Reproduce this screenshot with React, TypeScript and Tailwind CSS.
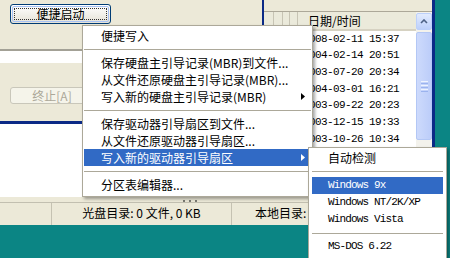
import React from 'react';

const dates = [
  '2008-02-11 15:37',
  '2004-02-14 20:51',
  '2003-07-20 20:34',
  '2004-03-01 16:21',
  '2003-09-22 20:23',
  '2003-12-15 19:33',
  '2003-10-26 10:34',
];

type Entry = { label: string; sub?: boolean; active?: boolean } | 'sep';

const mainMenu: Entry[] = [
  { label: '便捷写入' },
  'sep',
  { label: '保存硬盘主引导记录(MBR)到文件...' },
  { label: '从文件还原硬盘主引导记录(MBR)...' },
  { label: '写入新的硬盘主引导记录(MBR)', sub: true },
  'sep',
  { label: '保存驱动器引导扇区到文件...' },
  { label: '从文件还原驱动器引导扇区...' },
  { label: '写入新的驱动器引导扇区', sub: true, active: true },
  'sep',
  { label: '分区表编辑器...' },
];

const Arrow = () => (
  <svg width="4" height="7" viewBox="0 0 4 7">
    <path d="M0 0L4 3.5L0 7Z" fill="currentColor" />
  </svg>
);

const Sep = ({ h = 'h-[10px]' }: { h?: string }) => (
  <div className={`${h} flex items-center`}>
    <div className="h-px w-full bg-[#aca899]" />
  </div>
);

const ContextMenu = () => (
  <div className="absolute left-[82px] top-[25px] w-[231px] bg-white border border-[#aca899] p-[1px] pb-[3px] shadow-[2px_2px_3px_rgba(0,0,0,0.35)]">
    {mainMenu.map((e, i) =>
      e === 'sep' ? (
        <Sep key={i} />
      ) : (
        <div
          key={i}
          className={`h-[17px] flex items-center justify-between pl-[17px] pr-[6px] whitespace-nowrap ${
            e.active ? 'bg-[#316ac5] text-white' : 'text-black'
          }`}
        >
          <span>{e.label}</span>
          {e.sub && <Arrow />}
        </div>
      )
    )}
  </div>
);

const SubMenu = () => (
  <div className="absolute left-[308px] top-[147px] w-[139px] bg-white border border-[#aca899] px-[3px] pt-[1px] pb-[6px] shadow-[2px_2px_3px_rgba(0,0,0,0.35)]">
    <div className="h-[17px] flex items-center pl-[16px]">自动检测</div>
    <Sep h="h-[11px]" />
    <div className="font-['Liberation_Mono',monospace] text-[11px] leading-[13px] tracking-[-0.85px]">
      <div className="h-[17px] flex items-center pl-[16px] bg-[#316ac5] text-white">Windows 9x</div>
      <div className="h-[17px] flex items-center pl-[16px]">Windows NT/2K/XP</div>
      <div className="h-[17px] flex items-center pl-[16px]">Windows Vista</div>
    </div>
    <Sep />
    <div className="font-['Liberation_Mono',monospace] text-[11px] leading-[13px] tracking-[-0.85px]">
      <div className="h-[17px] flex items-center pl-[16px]">MS-DOS 6.22</div>
    </div>
  </div>
);

const ScrollBar = () => (
  <div className="w-[16px] flex flex-col bg-[#f3f2ec] pt-[1px]">
    <div className="h-[17px] rounded-[2px] border border-[#bcd0fa] bg-gradient-to-b from-[#e2ebfe] to-[#bdd0fb] flex items-center justify-center">
      <svg width="8" height="5" viewBox="0 0 8 5">
        <path d="M1 4L4 1L7 4" stroke="#4d6185" strokeWidth="1.6" fill="none" />
      </svg>
    </div>
    <div className="mt-[2px] h-[108px] rounded-[2px] border border-[#b3c7f5] bg-gradient-to-r from-[#cddafc] to-[#bccdf9] flex flex-col items-center justify-center gap-[1px]">
      <div className="h-px w-[7px] bg-[#eef3fe]" />
      <div className="h-px w-[7px] bg-[#9bb3ee]" />
      <div className="h-px w-[7px] bg-[#eef3fe]" />
      <div className="h-px w-[7px] bg-[#9bb3ee]" />
      <div className="h-px w-[7px] bg-[#eef3fe]" />
      <div className="h-px w-[7px] bg-[#9bb3ee]" />
    </div>
  </div>
);

export default function App() {
  return (
    <div className="w-[450px] h-[258px] overflow-hidden relative bg-[#0b8584] font-['Noto_Sans_CJK_SC',sans-serif] text-[12px] leading-none text-black">
      <div className="w-[435px] h-[225px] bg-[#ece9d8] border-r-[3px] border-[#0b2a86] flex flex-col">
        <div className="flex h-[197px]">
          {/* left column */}
          <div className="w-[262px] flex flex-col">
            <div className="h-[49px] pt-[4px] pl-[10px]">
              <div className="w-[101px] h-[20px] rounded-[3px] border border-[#003c74] bg-gradient-to-b from-white to-[#e6e3d6] p-[1px]">
                <div className="h-full w-full rounded-[2px] border border-[#a8c2f5] p-[1px]">
                  <div className="h-full w-full border border-dotted border-[#333] flex items-center justify-center">
                    便捷启动
                  </div>
                </div>
              </div>
            </div>
            <div className="h-[14px] bg-white border-t-2 border-[#a3a196]" />
            <div className="h-[58px] pt-[24px] pl-[10px]">
              <div className="w-[84px] h-[17px] rounded-[3px] border border-[#c9c7ba] bg-[#f5f4ea] text-[#aca899] flex items-center justify-center">
                终止[A]
              </div>
            </div>
            <div className="h-[3px] bg-[#0b2a86]" />
            <div className="flex-1 bg-white" />
          </div>

          {/* right list panel */}
          <div className="w-[170px] flex flex-col border-l-2 border-[#0b2a86]">
            <div className="h-[12px] bg-[#ece9d8] border-b border-[#aca899]" />
            <div className="flex flex-1 min-h-0">
              <div className="flex-1 bg-white flex flex-col">
                <div className="h-[19px] flex bg-[#ebeadb] border-b-2 border-[#d6d2c2]">
                  <div className="w-[10px] border-r border-[#c7c4b4]" />
                  <div className="w-[9px] border-r border-[#c7c4b4]" />
                  <div className="w-[7px] border-r border-[#c7c4b4]" />
                  <div className="w-[8px] border-r border-[#c7c4b4]" />
                  <div className="flex-1 pl-[10px] flex items-center">日期/时间</div>
                </div>
                {dates.map((d) => (
                  <div key={d} className="h-[16.67px] flex items-center">
                    <div className="w-[34px]" />
                    <span className="pl-[5px] font-['Liberation_Mono',monospace] text-[11px] tracking-[-0.6px]">
                      {d}
                    </span>
                  </div>
                ))}
              </div>
              <ScrollBar />
            </div>
          </div>
        </div>

        {/* splitter grip */}
        <div className="h-[5px] flex items-end pl-[183px] gap-[4px]">
          <div className="w-[2px] h-[2px] bg-[#7a7a72]" />
          <div className="w-[2px] h-[2px] bg-[#7a7a72]" />
          <div className="w-[2px] h-[2px] bg-[#7a7a72]" />
        </div>

        {/* status bar */}
        <div className="h-[23px] flex border-t border-[#c2bfb0] whitespace-nowrap">
          <div className="w-[52px] border-r border-[#c5c2b2]" />
          <div className="w-[180px] border-r border-[#c5c2b2] flex items-center justify-center pb-[2px]">
            光盘目录: 0 文件, 0 KB
          </div>
          <div className="flex-1 flex items-center pl-[23px] pb-[2px]">本地目录:</div>
        </div>
      </div>

      <ContextMenu />
      <SubMenu />
    </div>
  );
}
